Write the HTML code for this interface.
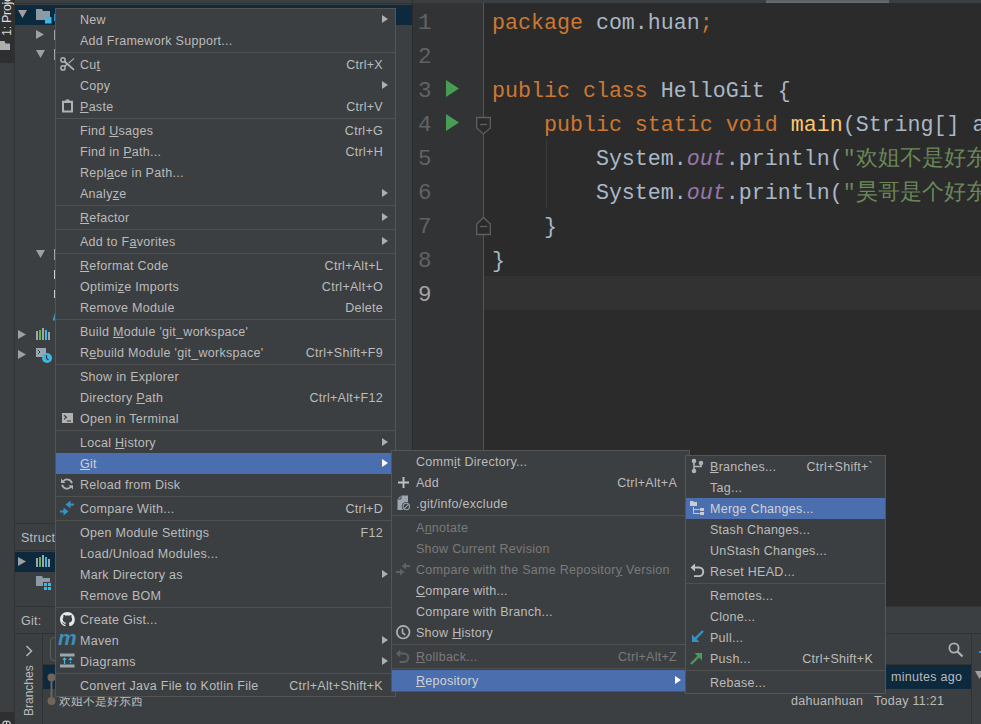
<!DOCTYPE html>
<html><head><meta charset="utf-8"><style>
*{box-sizing:border-box}
html,body{margin:0;padding:0}
body{width:981px;height:724px;overflow:hidden;position:relative;background:#3c3f41;font-family:"Liberation Sans", sans-serif;font-size:12.5px;color:#bbbbbb;letter-spacing:0.28px}
.a{position:absolute}
.menu{position:absolute;background:#3c3f41;border:1px solid #555555}
.it{position:absolute;left:0;right:0;height:21px;white-space:nowrap}
.it .t{position:absolute;top:4px;line-height:15px}
.it .k{position:absolute;top:4px;line-height:15px;text-align:right}
.hl{background:#4b6eaf;color:#d2d2d2}
.dis{color:#7a7a7a}
.sep{position:absolute;left:0;right:0;height:1px;background:#515151}
u{text-decoration:underline;text-underline-offset:1px;text-decoration-thickness:1px}
.arr{position:absolute;width:0;height:0;border-top:4px solid transparent;border-bottom:4px solid transparent;border-left:6px solid #aeaeae}
.code{position:absolute;font-family:"Liberation Mono", monospace;font-size:21.65px;letter-spacing:0;white-space:pre;color:#a9b7c6;line-height:34px;height:34px}
.kw{color:#cc7832}
.fn{color:#ffc66d}
.st{color:#9876aa;font-style:italic}
.str{color:#6a8759}
.ln{position:absolute;font-family:"Liberation Mono", monospace;font-size:22.5px;letter-spacing:0;color:#606366;line-height:34px}
</style></head>
<body>
<div class="a" style="left:0;top:0;width:14px;height:724px;background:#3c3f41"></div><div class="a" style="left:0;top:0;width:14px;height:63px;background:#2d2f30"></div><div class="a" style="left:14px;top:0;width:1px;height:724px;background:#2f3133"></div><div class="a" style="left:0;top:712px;width:14px;height:12px;background:#2d2f30"></div><div class="a" style="left:15px;top:3px;width:397px;height:1px;background:#2f3133"></div><div class="a" style="left:15px;top:5px;width:397px;height:20px;background:#0d293e"></div><div class="a" style="left:412px;top:0;width:569px;height:3px;background:#3c3f41"></div><div class="a" style="left:766px;top:0;width:123px;height:4px;background:linear-gradient(#5c6063,#6e7275)"></div><div class="a" style="left:412px;top:0;width:1px;height:607px;background:#2b2b2b"></div><div class="a" style="left:413px;top:3px;width:70px;height:604px;background:#313335"></div><div class="a" style="left:483px;top:3px;width:1px;height:604px;background:#555555"></div><div class="a" style="left:484px;top:3px;width:497px;height:604px;background:#2b2b2b"></div><div class="a" style="left:484px;top:276px;width:497px;height:34px;background:#323232"></div><div class="a" style="left:15px;top:523px;width:397px;height:1px;background:#323232"></div><div class="a" style="left:15px;top:552px;width:397px;height:20px;background:#0d293e"></div><div class="a" style="left:21px;top:529px;line-height:18px">Struct</div><div class="a" style="left:15px;top:606px;width:966px;height:1px;background:#323232"></div><div class="a" style="left:21px;top:612px;line-height:18px">Git:</div><div class="a" style="left:15px;top:633px;width:966px;height:1px;background:#323232"></div><div class="a" style="left:42px;top:634px;width:1px;height:90px;background:#323232"></div><div class="a" style="left:971px;top:634px;width:1px;height:90px;background:#323232"></div><div class="a" style="left:43px;top:665px;width:928px;height:24px;background:#0d293e"></div><div class="a" style="left:791px;top:692px;line-height:18px;color:#bbbbbb">dahuanhuan</div><div class="a" style="left:874px;top:692px;line-height:18px;color:#bbbbbb">Today 11:21</div><div class="a" style="left:891px;top:668px;line-height:18px;color:#bbbbbb">minutes ago</div><div class="a" style="left:59px;top:692px;line-height:18px;color:#bbbbbb;font-size:12px;letter-spacing:0">欢姐不是好东西</div><div class="code" style="left:492px;top:7px"><span class="kw">package</span> com.huan<span class="kw">;</span></div><div class="ln" style="left:418px;top:6px;color:#606366">1</div><div class="code" style="left:492px;top:41px"></div><div class="ln" style="left:418px;top:40px;color:#606366">2</div><div class="code" style="left:492px;top:75px"><span class="kw">public class</span> HelloGit {</div><div class="ln" style="left:418px;top:74px;color:#606366">3</div><div class="code" style="left:492px;top:109px">    <span class="kw">public static void</span> <span class="fn">main</span>(String[] args) {</div><div class="ln" style="left:418px;top:108px;color:#606366">4</div><div class="code" style="left:492px;top:143px">        System.<span class="st">out</span>.println(<span class="str">"欢姐不是好东西"</span>)<span class="kw">;</span></div><div class="ln" style="left:418px;top:142px;color:#606366">5</div><div class="code" style="left:492px;top:177px">        System.<span class="st">out</span>.println(<span class="str">"昊哥是个好东西"</span>)<span class="kw">;</span></div><div class="ln" style="left:418px;top:176px;color:#606366">6</div><div class="code" style="left:492px;top:211px">    }</div><div class="ln" style="left:418px;top:210px;color:#606366">7</div><div class="code" style="left:492px;top:245px">}</div><div class="ln" style="left:418px;top:244px;color:#606366">8</div><div class="code" style="left:492px;top:279px"></div><div class="ln" style="left:418px;top:278px;color:#a4a3a3">9</div>
<svg class="a" style="left:18px;top:10px" width="9" height="8" viewBox="0 0 9 8"><path d="M0 0H9L4.5 8Z" fill="#a0a0a0"/></svg><svg class="a" style="left:36px;top:9px" width="16" height="15" viewBox="0 0 16 15"><path d="M0 0H6L7 2H14V11H0Z" fill="#8c9aa5"/><rect x="9" y="8" width="6.5" height="6.5" fill="#40b6e0"/></svg><div class="a" style="left:54px;top:14px;width:1px;height:7px;background:#3592c4"></div><svg class="a" style="left:36px;top:30px" width="8" height="9" viewBox="0 0 8 9"><path d="M0 0V9L8 4.5Z" fill="#a0a0a0"/></svg><div class="a" style="left:54px;top:30px;width:1px;height:10px;background:#9aa7b0"></div><svg class="a" style="left:36px;top:50px" width="9" height="8" viewBox="0 0 9 8"><path d="M0 0H9L4.5 8Z" fill="#a0a0a0"/></svg><div class="a" style="left:54px;top:49px;width:1px;height:11px;background:#9aa7b0"></div><svg class="a" style="left:36px;top:250px" width="9" height="8" viewBox="0 0 9 8"><path d="M0 0H9L4.5 8Z" fill="#a0a0a0"/></svg><div class="a" style="left:54px;top:249px;width:1px;height:11px;background:#9aa7b0"></div><div class="a" style="left:54px;top:270px;width:1px;height:9px;background:#d0d0d0"></div><div class="a" style="left:54px;top:290px;width:1px;height:8px;background:#d0d0d0"></div><svg class="a" style="left:52px;top:312px" width="3" height="9" viewBox="0 0 3 9"><path d="M2.6 0.5L3 8.5H0.8Z" fill="#40a0d0"/></svg><svg class="a" style="left:2px;top:720px" width="9" height="4" viewBox="0 0 9 4"><path d="M1 4V2.5Q2.5 0.5 4.5 1.5Q6.5 0.5 8 2.5V4" stroke="#d0d0d0" stroke-width="1.2" fill="none"/><path d="M4.5 1.5V4" stroke="#d0d0d0" stroke-width="1.2"/></svg><svg class="a" style="left:18px;top:330px" width="8" height="9" viewBox="0 0 8 9"><path d="M0 0V9L8 4.5Z" fill="#a0a0a0"/></svg><svg class="a" style="left:36px;top:328px" width="15" height="12" viewBox="0 0 15 12"><rect x="0" y="3" width="2" height="9" fill="#9aa7b0"/><rect x="3" y="2" width="2" height="10" fill="#62b543"/><rect x="6" y="0" width="2" height="12" fill="#9aa7b0"/><rect x="9" y="2" width="2" height="10" fill="#40b6e0"/><rect x="12" y="4" width="2" height="8" fill="#9aa7b0"/></svg><svg class="a" style="left:18px;top:350px" width="8" height="9" viewBox="0 0 8 9"><path d="M0 0V9L8 4.5Z" fill="#a0a0a0"/></svg><svg class="a" style="left:36px;top:347px" width="16" height="16" viewBox="0 0 16 16"><rect x="0" y="1" width="10" height="9" fill="#9aa7b0"/><path d="M2 3L4 5L2 7" stroke="#3c3f41" stroke-width="1" fill="none"/><circle cx="11" cy="11" r="5" fill="#40b6e0"/><path d="M10.5 8V11.5L12.5 13" stroke="#3c3f41" stroke-width="1.2" fill="none"/></svg><svg class="a" style="left:18px;top:557px" width="8" height="9" viewBox="0 0 8 9"><path d="M0 0V9L8 4.5Z" fill="#a0a0a0"/></svg><svg class="a" style="left:36px;top:555px" width="15" height="12" viewBox="0 0 15 12"><rect x="0" y="3" width="2" height="9" fill="#9aa7b0"/><rect x="3" y="2" width="2" height="10" fill="#62b543"/><rect x="6" y="0" width="2" height="12" fill="#9aa7b0"/><rect x="9" y="2" width="2" height="10" fill="#40b6e0"/><rect x="12" y="4" width="2" height="8" fill="#9aa7b0"/></svg><svg class="a" style="left:36px;top:576px" width="16" height="15" viewBox="0 0 16 15"><path d="M0 0H6L7 2H14V10H0Z" fill="#8c9aa5"/><rect x="7" y="6" width="9" height="9" fill="#3c3f41"/><rect x="8" y="7" width="3" height="3" fill="#40b6e0"/><rect x="12" y="7" width="3" height="3" fill="#40b6e0"/><rect x="8" y="11" width="3" height="3" fill="#40b6e0"/><rect x="12" y="11" width="3" height="3" fill="#40b6e0"/></svg><div class="a" style="left:15px;top:550px;width:397px;height:1px;background:#323232"></div><div class="a" style="left:0px;top:36px;transform-origin:0 0;transform:rotate(-90deg);font-size:12.5px;line-height:14px;color:#dcdcdc;white-space:nowrap;letter-spacing:-0.3px">1: Project</div><svg class="a" style="left:0px;top:41px" width="10" height="9" viewBox="0 0 10 9"><path d="M-4 0H4.5L5.5 2.5H10V9H-4Z" fill="#afafaf"/></svg><svg class="a" style="left:25px;top:645px" width="8" height="12" viewBox="0 0 8 12"><path d="M1.5 1L6.5 6L1.5 11" stroke="#afb1b3" stroke-width="1.6" fill="none"/></svg><div class="a" style="left:22px;top:716px;transform-origin:0 0;transform:rotate(-90deg);font-size:12px;line-height:14px;color:#bbbbbb;white-space:nowrap;letter-spacing:0">Branches</div><div class="a" style="left:50px;top:637px;width:30px;height:24px;border:1px solid #5e6060;border-radius:4px"></div><svg class="a" style="left:46px;top:672px" width="12" height="34" viewBox="0 0 12 34"><path d="M5.5 5V29" stroke="#6f655b" stroke-width="2"/><circle cx="5.5" cy="5.5" r="4" fill="#6f655b"/><circle cx="5.5" cy="29" r="4" fill="#6f655b"/></svg><svg class="a" style="left:948px;top:642px" width="16" height="16" viewBox="0 0 16 16"><circle cx="6" cy="6" r="4.6" stroke="#afb1b3" stroke-width="1.8" fill="none"/><path d="M9.5 9.5L14.5 14.5" stroke="#afb1b3" stroke-width="2.2"/></svg><svg class="a" style="left:975px;top:671px" width="9" height="8" viewBox="0 0 9 8"><path d="M0 0H9L4.5 8Z" fill="#a0a0a0"/></svg><div class="a" style="left:43px;top:664px;width:928px;height:1px;background:#323232"></div><div class="a" style="left:979px;top:651px;width:2px;height:2px;background:#3592c4"></div><svg class="a" style="left:446px;top:80px" width="13" height="17" viewBox="0 0 13 17"><path d="M0 0V17L13 8.5Z" fill="#499c54"/></svg><svg class="a" style="left:446px;top:114px" width="13" height="17" viewBox="0 0 13 17"><path d="M0 0V17L13 8.5Z" fill="#499c54"/></svg><svg class="a" style="left:475px;top:116px" width="17" height="20" viewBox="0 0 17 20"><path d="M1.7 1.5H15.3V12L8.5 18L1.7 12Z" fill="#2b2b2b" stroke="#5e6060" stroke-width="1.3"/><path d="M5 8.5H12" stroke="#5e6060" stroke-width="1.3"/></svg><svg class="a" style="left:475px;top:216px" width="17" height="20" viewBox="0 0 17 20"><path d="M1.7 18.5H15.3V8L8.5 1.5L1.7 8Z" fill="#2b2b2b" stroke="#5e6060" stroke-width="1.3"/><path d="M5 10.5H12" stroke="#5e6060" stroke-width="1.3"/></svg><div class="a" style="left:546px;top:140px;width:1px;height:68px;background:#3b3b3b"></div>
<div class="menu" style="left:55px;top:8px;width:341px;height:689px"><div class="it" style="top:0px"><span class="t" style="left:24px">New</span><span class="arr" style="left:326px;top:6px;border-left-color:#aeaeae"></span></div><div class="it" style="top:21px"><span class="t" style="left:24px">Add Framework Support...</span></div><div class="sep" style="top:43px"></div><div class="it" style="top:45px"><span class="t" style="left:24px">Cu<u>t</u></span><span class="k" style="right:12px">Ctrl+X</span></div><div class="it" style="top:66px"><span class="t" style="left:24px">Copy</span><span class="arr" style="left:326px;top:6px;border-left-color:#aeaeae"></span></div><div class="it" style="top:87px"><span class="t" style="left:24px"><u>P</u>aste</span><span class="k" style="right:12px">Ctrl+V</span></div><div class="sep" style="top:109px"></div><div class="it" style="top:111px"><span class="t" style="left:24px">Find <u>U</u>sages</span><span class="k" style="right:12px">Ctrl+G</span></div><div class="it" style="top:132px"><span class="t" style="left:24px">Find in <u>P</u>ath...</span><span class="k" style="right:12px">Ctrl+H</span></div><div class="it" style="top:153px"><span class="t" style="left:24px">Repl<u>a</u>ce in Path...</span></div><div class="it" style="top:174px"><span class="t" style="left:24px">Analy<u>z</u>e</span><span class="arr" style="left:326px;top:6px;border-left-color:#aeaeae"></span></div><div class="sep" style="top:196px"></div><div class="it" style="top:198px"><span class="t" style="left:24px"><u>R</u>efactor</span><span class="arr" style="left:326px;top:6px;border-left-color:#aeaeae"></span></div><div class="sep" style="top:220px"></div><div class="it" style="top:222px"><span class="t" style="left:24px">Add to F<u>a</u>vorites</span><span class="arr" style="left:326px;top:6px;border-left-color:#aeaeae"></span></div><div class="sep" style="top:244px"></div><div class="it" style="top:246px"><span class="t" style="left:24px"><u>R</u>eformat Code</span><span class="k" style="right:12px">Ctrl+Alt+L</span></div><div class="it" style="top:267px"><span class="t" style="left:24px">Optimi<u>z</u>e Imports</span><span class="k" style="right:12px">Ctrl+Alt+O</span></div><div class="it" style="top:288px"><span class="t" style="left:24px">Remove Module</span><span class="k" style="right:12px">Delete</span></div><div class="sep" style="top:310px"></div><div class="it" style="top:312px"><span class="t" style="left:24px">Build <u>M</u>odule 'git_workspace'</span></div><div class="it" style="top:333px"><span class="t" style="left:24px">R<u>e</u>build Module 'git_workspace'</span><span class="k" style="right:12px">Ctrl+Shift+F9</span></div><div class="sep" style="top:355px"></div><div class="it" style="top:357px"><span class="t" style="left:24px">Show in Explorer</span></div><div class="it" style="top:378px"><span class="t" style="left:24px">Directory <u>P</u>ath</span><span class="k" style="right:12px">Ctrl+Alt+F12</span></div><div class="it" style="top:399px"><span class="t" style="left:24px">Open in Terminal</span></div><div class="sep" style="top:421px"></div><div class="it" style="top:423px"><span class="t" style="left:24px">Local <u>H</u>istory</span><span class="arr" style="left:326px;top:6px;border-left-color:#aeaeae"></span></div><div class="it hl" style="top:444px"><span class="t" style="left:24px"><u>G</u>it</span><span class="arr" style="left:326px;top:6px;border-left-color:#ffffff"></span></div><div class="it" style="top:465px"><span class="t" style="left:24px">Reload from Disk</span></div><div class="sep" style="top:487px"></div><div class="it" style="top:489px"><span class="t" style="left:24px">Compare With...</span><span class="k" style="right:12px">Ctrl+D</span></div><div class="sep" style="top:511px"></div><div class="it" style="top:513px"><span class="t" style="left:24px">Open Module Settings</span><span class="k" style="right:12px">F12</span></div><div class="it" style="top:534px"><span class="t" style="left:24px">Load/Unload Modules...</span></div><div class="it" style="top:555px"><span class="t" style="left:24px">Mark Directory as</span><span class="arr" style="left:326px;top:6px;border-left-color:#aeaeae"></span></div><div class="it" style="top:576px"><span class="t" style="left:24px">Remove BOM</span></div><div class="sep" style="top:598px"></div><div class="it" style="top:600px"><span class="t" style="left:24px">Create Gist...</span></div><div class="it" style="top:621px"><span class="t" style="left:24px">Maven</span><span class="arr" style="left:326px;top:6px;border-left-color:#aeaeae"></span></div><div class="it" style="top:642px"><span class="t" style="left:24px">Diagrams</span><span class="arr" style="left:326px;top:6px;border-left-color:#aeaeae"></span></div><div class="sep" style="top:664px"></div><div class="it" style="top:666px"><span class="t" style="left:24px">Convert Java File to Kotlin File</span><span class="k" style="right:12px">Ctrl+Alt+Shift+K</span></div></div><div class="menu" style="left:391px;top:450px;width:299px;height:242px"><div class="it" style="top:0px"><span class="t" style="left:24px">Comm<u>i</u>t Directory...</span></div><div class="it" style="top:21px"><span class="t" style="left:24px">Add</span><span class="k" style="right:12px">Ctrl+Alt+A</span></div><div class="it" style="top:42px"><span class="t" style="left:24px">.git/info/exclude</span></div><div class="sep" style="top:64px"></div><div class="it dis" style="top:66px"><span class="t" style="left:24px">A<u>n</u>notate</span></div><div class="it dis" style="top:87px"><span class="t" style="left:24px">Show Current Revision</span></div><div class="it dis" style="top:108px"><span class="t" style="left:24px">Compare with the Same Repositor<u>y</u> Version</span></div><div class="it" style="top:129px"><span class="t" style="left:24px"><u>C</u>ompare with...</span></div><div class="it" style="top:150px"><span class="t" style="left:24px">Compare with Branch...</span></div><div class="it" style="top:171px"><span class="t" style="left:24px">Show <u>H</u>istory</span></div><div class="sep" style="top:193px"></div><div class="it dis" style="top:195px"><span class="t" style="left:24px"><u>R</u>ollback...</span><span class="k" style="right:12px">Ctrl+Alt+Z</span></div><div class="sep" style="top:217px"></div><div class="it hl" style="top:219px"><span class="t" style="left:24px"><u>R</u>epository</span><span class="arr" style="left:283px;top:6px;border-left-color:#ffffff"></span></div></div><div class="menu" style="left:685px;top:455px;width:201px;height:239px"><div class="it" style="top:0px"><span class="t" style="left:24px"><u>B</u>ranches...</span><span class="k" style="right:12px">Ctrl+Shift+`</span></div><div class="it" style="top:21px"><span class="t" style="left:24px">Tag...</span></div><div class="it hl" style="top:42px"><span class="t" style="left:24px">Merge Changes...</span></div><div class="it" style="top:63px"><span class="t" style="left:24px">Stash Changes...</span></div><div class="it" style="top:84px"><span class="t" style="left:24px">UnStash Changes...</span></div><div class="it" style="top:105px"><span class="t" style="left:24px">Reset HEAD...</span></div><div class="sep" style="top:127px"></div><div class="it" style="top:129px"><span class="t" style="left:24px">Remotes...</span></div><div class="it" style="top:150px"><span class="t" style="left:24px">Clone...</span></div><div class="it" style="top:171px"><span class="t" style="left:24px">Pull...</span></div><div class="it" style="top:192px"><span class="t" style="left:24px">Push...</span><span class="k" style="right:12px">Ctrl+Shift+K</span></div><div class="sep" style="top:214px"></div><div class="it" style="top:216px"><span class="t" style="left:24px">Rebase...</span></div></div>
<svg class="a" style="left:58px;top:55px" width="18" height="18" viewBox="0 0 18 18"><circle cx="5" cy="4.9" r="2.1" stroke="#afb1b3" stroke-width="1.5" fill="none"/><circle cx="5" cy="12.9" r="2.1" stroke="#afb1b3" stroke-width="1.5" fill="none"/><path d="M6.3 6.2L16 14.9" stroke="#afb1b3" stroke-width="1.9"/><path d="M6.5 11.5L9.3 9" stroke="#afb1b3" stroke-width="1.6"/><path d="M10 7.9L15.8 2.9L16.4 3.7L11.2 8.4Z" fill="#afb1b3"/></svg><svg class="a" style="left:62px;top:99px" width="11" height="14" viewBox="0 0 11 14"><path d="M0 1.8H3.6V0.8Q5.5 -0.2 7.4 0.8V1.8H11V13.5H0Z" fill="#afb1b3"/><rect x="2" y="4" width="7" height="7.5" fill="#3c3f41"/></svg><svg class="a" style="left:62px;top:413px" width="11" height="10" viewBox="0 0 11 10"><rect x="0" y="0" width="11" height="10" fill="#afb1b3"/><path d="M2 2.2L4.5 4.3L2 6.4" stroke="#3c3f41" stroke-width="1.2" fill="none"/><path d="M5 8H9" stroke="#3c3f41" stroke-width="1.1"/></svg><svg class="a" style="left:60px;top:478px" width="14" height="13" viewBox="0 0 14 13"><path d="M3.3 3.2A4.9 4.9 0 0 1 11.9 5.3" stroke="#afb1b3" stroke-width="1.8" fill="none"/><path d="M1 0.6V5H5.4Z" fill="#afb1b3"/><path d="M2.1 6.8A4.9 4.9 0 0 0 10.7 8.8" stroke="#afb1b3" stroke-width="1.8" fill="none"/><path d="M13 11.6V7.2H8.6Z" fill="#afb1b3"/></svg><svg class="a" style="left:59px;top:500px" width="16" height="16" viewBox="0 0 16 16"><path d="M15 4.5H10" stroke="#3592c4" stroke-width="2"/><path d="M6.5 4.5L11.5 0.5V8.5Z" fill="#3592c4"/><path d="M1 11.5H6" stroke="#3592c4" stroke-width="2"/><path d="M9.5 11.5L4.5 7.5V15.5Z" fill="#3592c4"/></svg><svg class="a" style="left:59.8px;top:611.6px" width="14.8" height="14.8" viewBox="0 0 16 16"><path d="M8 0C3.58 0 0 3.58 0 8c0 3.54 2.29 6.53 5.47 7.59.4.07.55-.17.55-.38 0-.19-.01-.82-.01-1.49-2.01.37-2.53-.49-2.69-.94-.09-.23-.48-.94-.82-1.130-.28-.15-.68-.52-.01-.53.63-.01 1.08.58 1.23.82.72 1.21 1.87.87 2.330.66.07-.52.28-.87.51-1.07-1.78-.2-3.64-.89-3.64-3.95 0-.87.31-1.59.82-2.15-.08-.2-.36-1.02.08-2.12 0 0 .67-.21 2.2.82.64-.18 1.32-.27 2-.27.68 0 1.36.09 2 .27 1.53-1.04 2.2-.82 2.2-.82.44 1.1.16 1.92.08 2.12.51.56.82 1.27.82 2.15 0 3.07-1.87 3.75-3.65 3.95.29.25.54.73.54 1.48 0 1.07-.01 1.930-.01 2.2 0 .21.15.46.55.38A8.013 8.013 0 0 0 16 8c0-4.42-3.58-8-8-8z" fill="#e8e8e8"/></svg><div class="a" style="left:58px;top:628px;font:italic bold 21px/20px 'Liberation Sans',sans-serif;color:#3d8fb8;letter-spacing:-0.5px">m</div><svg class="a" style="left:60px;top:653px" width="15" height="15" viewBox="0 0 15 15"><rect x="0" y="0.5" width="14.5" height="3" fill="#9aa7b0"/><rect x="0" y="11.5" width="14.5" height="3" fill="#9aa7b0"/><path d="M4.5 11V5.5" stroke="#40b6e0" stroke-width="1.2"/><path d="M2.3 7L4.5 4.2L6.7 7Z" fill="#40b6e0"/><path d="M10.5 6V11" stroke="#40b6e0" stroke-width="1.2" stroke-dasharray="1.5 1.2"/><path d="M8.3 7L10.5 4.2L12.7 7Z" fill="#40b6e0"/></svg><svg class="a" style="left:398px;top:477px" width="11" height="11" viewBox="0 0 11 11"><path d="M5.5 0V11M0 5.5H11" stroke="#c0c0c0" stroke-width="1.9"/></svg><svg class="a" style="left:397px;top:495px" width="14" height="16" viewBox="0 0 14 16"><path d="M4 0.5H11V15H0.5V4Z" fill="#9aa7b0"/><path d="M0 4H4V0" stroke="#3c3f41" stroke-width="0.9" fill="none"/><circle cx="9.3" cy="11.5" r="4.6" fill="#3c3f41"/><circle cx="9.3" cy="11.5" r="3.2" stroke="#9aa7b0" stroke-width="1.1" fill="none"/><path d="M7.1 13.7L11.5 9.3" stroke="#9aa7b0" stroke-width="1.1"/></svg><svg class="a" style="left:395px;top:562px" width="16" height="14" viewBox="0 0 16 14"><path d="M15 4H10" stroke="#5f6163" stroke-width="2"/><path d="M6.5 4L11 0.5V7.5Z" fill="#5f6163"/><path d="M1 10H6" stroke="#5f6163" stroke-width="2"/><path d="M9.5 10L5 6.5V13.5Z" fill="#5f6163"/></svg><svg class="a" style="left:396px;top:625px" width="15" height="15" viewBox="0 0 15 15"><circle cx="7.2" cy="7.2" r="6.3" stroke="#afb1b3" stroke-width="1.7" fill="none"/><path d="M6.5 3.5V7.8L9.3 10" stroke="#afb1b3" stroke-width="1.6" fill="none"/></svg><svg class="a" style="left:396px;top:649px" width="14" height="14" viewBox="0 0 14 14"><path d="M1.5 4.5H8A4.2 4.2 0 0 1 8 13H3.5" stroke="#5f6163" stroke-width="1.9" fill="none"/><path d="M0 4.5L4.2 0.5V8.5Z" fill="#5f6163"/></svg><svg class="a" style="left:691px;top:458px" width="13" height="16" viewBox="0 0 13 16"><circle cx="3" cy="3" r="2.3" fill="#afb1b3"/><circle cx="3" cy="13" r="2.3" fill="#afb1b3"/><circle cx="10" cy="5" r="2.3" fill="#afb1b3"/><path d="M3 3V13" stroke="#afb1b3" stroke-width="1.6"/><path d="M10 5V8.5H3" stroke="#afb1b3" stroke-width="1.6" fill="none"/></svg><svg class="a" style="left:689px;top:500px" width="17" height="16" viewBox="0 0 17 16"><path d="M1 1H4L5 2H8V6H1Z" fill="#c8ccd4"/><path d="M4.5 7V13.5H10.5M4.5 9.5H10.5" stroke="#c8ccd4" stroke-width="1" fill="none"/><rect x="11" y="8" width="4" height="3" fill="#c8ccd4"/><rect x="11" y="12" width="4" height="3" fill="#c8ccd4"/></svg><svg class="a" style="left:690px;top:563px" width="15" height="15" viewBox="0 0 15 15"><path d="M2 4.5H9A4.3 4.3 0 0 1 9 13.1H4" stroke="#c0c0c0" stroke-width="1.9" fill="none"/><path d="M0.5 4.5L5 0.5V8.5Z" fill="#c0c0c0"/></svg><svg class="a" style="left:691px;top:630px" width="13" height="13" viewBox="0 0 13 13"><path d="M12 1L4 9" stroke="#3592c4" stroke-width="2.4"/><path d="M1 4.5V12H8.5Z" fill="#3592c4"/></svg><svg class="a" style="left:690px;top:652px" width="13" height="13" viewBox="0 0 13 13"><path d="M1 12L9 4" stroke="#499c54" stroke-width="2.4"/><path d="M4.5 1H12V8.5Z" fill="#499c54"/></svg>
</body></html>
